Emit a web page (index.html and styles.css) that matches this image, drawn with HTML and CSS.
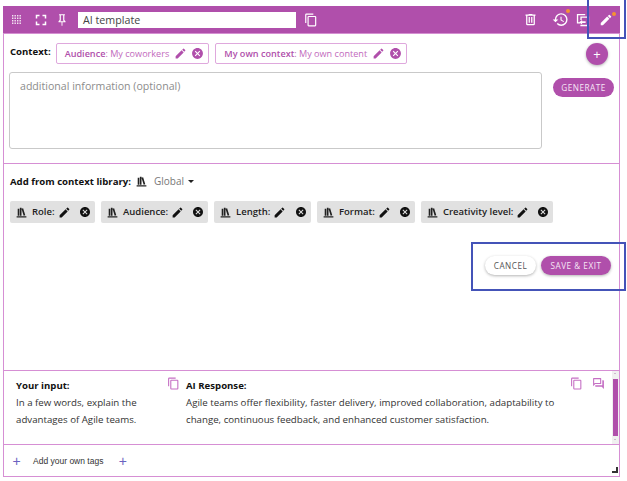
FILE: index.html
```html
<!DOCTYPE html>
<html lang="en">
<head>
<meta charset="utf-8">
<title>AI template</title>
<link rel="stylesheet" href="styles.css">
</head>
<body>
<svg class="defs" width="0" height="0" aria-hidden="true">
  <symbol id="pencil" viewBox="0 0 24 24"><path d="M3 17.25V21h3.75L17.81 9.94l-3.75-3.75L3 17.25zM20.71 7.04a1 1 0 0 0 0-1.41l-2.34-2.34a1 1 0 0 0-1.41 0l-1.83 1.83 3.75 3.75 1.83-1.83z"/></symbol>
  <symbol id="cancel" viewBox="0 0 24 24"><path d="M12 2C6.47 2 2 6.47 2 12s4.47 10 10 10 10-4.47 10-10S17.53 2 12 2zm5 13.59L15.59 17 12 13.41 8.41 17 7 15.59 10.59 12 7 8.41 8.41 7 12 10.59 15.59 7 17 8.41 13.41 12 17 15.59z"/></symbol>
  <symbol id="shelf" viewBox="0 0 24 24"><path d="M9 3V18H12V3H9M12 5L16 18L19 17L15 4L12 5M5 5V18H8V5H5M3 19V21H21V19H3Z"/></symbol>
  <symbol id="copy" viewBox="0 0 24 24"><path d="M19 21H8V7H19M19 5H8A2 2 0 0 0 6 7V21A2 2 0 0 0 8 23H19A2 2 0 0 0 21 21V7A2 2 0 0 0 19 5M16 1H4A2 2 0 0 0 2 3V17H4V3H16V1Z"/></symbol>
</svg>

<div class="window">
  <header class="toolbar">
    <svg class="ti ti-grid" viewBox="0 0 9 9"><path d="M0 0h1.400v1.400H0zM2.500 0h1.400v1.400H2.500zM5 0h1.400v1.400H5zM7.500 0h1.400v1.400H7.500zM0 2.500h1.400v1.400H0zM2.500 2.500h1.400v1.400H2.500zM5 2.500h1.400v1.400H5zM7.500 2.500h1.400v1.400H7.500zM0 5h1.400v1.400H0zM2.500 5h1.400v1.400H2.500zM5 5h1.400v1.400H5zM7.500 5h1.400v1.400H7.500zM0 7.500h1.400v1.400H0zM2.500 7.500h1.400v1.400H2.500zM5 7.500h1.400v1.400H5zM7.500 7.500h1.400v1.400H7.500z"/></svg>
    <svg class="ti ti-full" viewBox="0 0 24 24"><path d="M7 14H5v5h5v-2H7v-3zm-2-4h2V7h3V5H5v5zm12 7h-3v2h5v-5h-2v3zM14 5v2h3v3h2V5h-5z"/></svg>
    <svg class="ti ti-pin" viewBox="0 0 24 24"><path d="M16 12V4H17V2H7V4H8V12L6 14V16H11.2V22H12.8V16H18V14L16 12M8.8 14L10 12.8V4H14V12.8L15.2 14H8.8Z"/></svg>
    <div class="title-input">AI template</div>
    <svg class="ti ti-copy"><use href="#copy"/></svg>
    <span class="spacer"></span>
    <svg class="ti ti-trash" viewBox="0 0 24 24"><path d="M9 3V4H4V6H5V19A2 2 0 0 0 7 21H17A2 2 0 0 0 19 19V6H20V4H15V3H9M7 6H17V19H7V6M9 8V17H11V8H9M13 8V17H15V8H13Z"/></svg>
    <span class="dotted ti-history">
      <svg class="ti-fill" viewBox="0 0 24 24"><path d="M13 3a9 9 0 0 0-9 9H1l3.89 3.89.07.14L9 12H6c0-3.87 3.13-7 7-7s7 3.13 7 7-3.13 7-7 7c-1.93 0-3.68-.79-4.94-2.06l-1.42 1.42A8.954 8.954 0 0 0 13 21a9 9 0 0 0 0-18zm-1 5v5l4.28 2.54.72-1.21-3.5-2.08V8H12z"/></svg>
      <i class="dot"></i>
    </span>
    <svg class="ti ti-compare" viewBox="0 0 16 16"><path d="M1 1h9.500v1.500H2.500v8H5V12H1zM5 4h10v11H5v-1.500h8.500v-8h-7V8H5z"/><path d="M3.500 10.500 7 8v1.500h4v1.800H7V13z"/></svg>
    <span class="dotted ti-edit">
      <svg class="ti-fill"><use href="#pencil"/></svg>
      <i class="dot"></i>
    </span>
  </header>

  <section class="context">
    <div class="context-row">
      <strong class="label">Context:</strong>
      <span class="ctx-chip"><b>Audience</b>: My coworkers<svg class="ci ci-pen"><use href="#pencil"/></svg><svg class="ci ci-x"><use href="#cancel"/></svg></span>
      <span class="ctx-chip"><b>My own context</b>: My own content<svg class="ci ci-pen"><use href="#pencil"/></svg><svg class="ci ci-x"><use href="#cancel"/></svg></span>
      <span class="spacer"></span>
      <button class="fab">+</button>
    </div>
    <div class="prompt-row">
      <div class="prompt">additional information (optional)</div>
      <button class="pill generate">GENERATE</button>
    </div>
  </section>

  <section class="library">
    <div class="library-head">
      <strong class="label">Add from context library:</strong>
      <svg class="shelf-head"><use href="#shelf"/></svg>
      <span class="scope">Global</span>
      <i class="caret"></i>
    </div>
    <div class="tag-row">
      <span class="tag tag-role"><svg class="gi"><use href="#shelf"/></svg><b>Role:</b><svg class="gi gi-pen"><use href="#pencil"/></svg><svg class="gi gi-x"><use href="#cancel"/></svg></span>
      <span class="tag tag-aud"><svg class="gi"><use href="#shelf"/></svg><b>Audience:</b><svg class="gi gi-pen"><use href="#pencil"/></svg><svg class="gi gi-x"><use href="#cancel"/></svg></span>
      <span class="tag tag-len"><svg class="gi"><use href="#shelf"/></svg><b>Length:</b><svg class="gi gi-pen"><use href="#pencil"/></svg><svg class="gi gi-x"><use href="#cancel"/></svg></span>
      <span class="tag tag-fmt"><svg class="gi"><use href="#shelf"/></svg><b>Format:</b><svg class="gi gi-pen"><use href="#pencil"/></svg><svg class="gi gi-x"><use href="#cancel"/></svg></span>
      <span class="tag tag-cre"><svg class="gi"><use href="#shelf"/></svg><b>Creativity level:</b><svg class="gi gi-pen"><use href="#pencil"/></svg><svg class="gi gi-x"><use href="#cancel"/></svg></span>
    </div>
    <div class="actions">
      <button class="pill cancel">CANCEL</button>
      <button class="pill save">SAVE &amp; EXIT</button>
    </div>
  </section>

  <section class="history">
    <div class="col-input">
      <strong class="label">Your input:</strong>
      <p>In a few words, explain the<br>advantages of Agile teams.</p>
    </div>
    <svg class="hi hi-copy1"><use href="#copy"/></svg>
    <div class="col-response">
      <strong class="label">AI Response:</strong>
      <p>Agile teams offer flexibility, faster delivery, improved collaboration, adaptability to<br>change, continuous feedback, and enhanced customer satisfaction.</p>
    </div>
    <div class="response-icons">
      <svg class="hi"><use href="#copy"/></svg>
      <svg class="hi" viewBox="0 0 24 24"><path d="M15,4V11H5.170L4,12.170V4H15M16,2H3A1,1 0 0,0 2,3V17L6,13H16A1,1 0 0,0 17,12V3A1,1 0 0,0 16,2M21,6H19V15H6V17A1,1 0 0,0 7,18H18L22,22V7A1,1 0 0,0 21,6Z"/></svg>
    </div>
    <div class="scrollbar"><i class="up"></i><i class="thumb"></i><i class="down"></i></div>
  </section>

  <footer class="tags-foot">
    <span class="plus">+</span>
    <span class="foot-text">Add your own tags</span>
    <span class="plus">+</span>
    <i class="grip"></i>
  </footer>
</div>

<div class="callout callout-top"></div>
<div class="callout callout-actions"></div>
</body>
</html>
```

FILE: styles.css
```css
* { box-sizing: border-box; }

html, body {
  margin: 0;
  height: 100%;
  background: #fff;
  overflow: hidden;
}

body {
  position: relative;
  font-family: "Open Sans", "Noto Sans", sans-serif;
  color: #333;
}

.defs { position: absolute; }

.window {
  width: 617px;
  height: 471px;
  margin: 6px 0 0 3px;
  border: 1px solid #d68fd4;
  border-top: 0;
  display: flex;
  flex-direction: column;
}

.spacer { flex: 1; }

/* toolbar */
.toolbar {
  height: 28px;
  margin: 0 -1px;
  background: #b04fab;
  border-bottom: 1px solid #d58fd2;
  display: flex;
  align-items: center;
  flex: none;
}

.ti { fill: #fff; flex: none; display: block; }
.ti-fill { fill: #fff; width: 100%; height: 100%; display: block; }

.ti-grid { width: 9px; height: 9px; margin-left: 9px; opacity: .85; }
.ti-full { width: 18px; height: 18px; margin-left: 11px; }
.ti-pin { width: 14px; height: 14px; margin-left: 5px; }

.title-input {
  width: 218px;
  height: 16px;
  margin-left: 9px;
  padding-left: 5px;
  background: #fff;
  font-size: 10.7px;
  line-height: 16px;
  color: #444;
}

.ti-copy { width: 14px; height: 14px; margin-left: 8px; }
.ti-trash { width: 15px; height: 15px; }
.dotted { position: relative; display: block; flex: none; }
.ti-history { width: 17px; height: 17px; margin-left: 14px; }
.ti-compare { width: 14px; height: 14px; margin-left: 7px; }
.ti-edit { width: 14px; height: 14px; margin: 0 7px 0 9px; }

.dot {
  position: absolute;
  top: -1px;
  right: -3px;
  width: 4px;
  height: 4px;
  border-radius: 50%;
  background: #f59331;
}

.ti-history .dot { top: -2px; right: -1px; }
.ti-edit .dot { right: -3px; }

.label {
  font-size: 9.6px;
  font-weight: 700;
  color: #111;
}

/* context */
.context {
  height: 130px;
  flex: none;
  padding: 9px 5px 0 5px;
  border-bottom: 1px solid #d68fd4;
}

.context-row {
  display: flex;
  align-items: flex-start;
  height: 22px;
}

.context-row .label { line-height: 18px; margin: 0 5px 0 1px; }

.ctx-chip {
  height: 21px;
  margin-right: 6px;
  padding-left: 8px;
  border: 1px solid #dfa8dd;
  border-radius: 2px;
  font-size: 9.1px;
  line-height: 19px;
  color: #c26abd;
  display: flex;
  align-items: center;
  white-space: pre;
}

.ctx-chip b { color: #b04fab; font-weight: 600; }

.ci { fill: #b04fab; flex: none; }
.ci-pen { width: 13px; height: 13px; margin-left: 5px; }
.ci-x { width: 13px; height: 13px; margin: 0 4px 0 4px; }

.fab {
  width: 22px;
  height: 22px;
  margin: 0 6px 0 0;
  border: 0;
  padding: 0;
  border-radius: 50%;
  background: #b04fab;
  color: #fff;
  font: 400 13px/22px "Open Sans", sans-serif;
  box-shadow: 0 1px 3px rgba(0,0,0,.3);
}

.prompt-row {
  display: flex;
  align-items: flex-start;
  margin-top: 7px;
}

.prompt {
  width: 534px;
  height: 77px;
  border: 1px solid #c9c9c9;
  border-radius: 3px;
  padding: 6px 10px;
  font-size: 10.6px;
  line-height: 15px;
  color: #8c8c8c;
}

.pill {
  border: 0;
  border-radius: 10px;
  padding: 0;
  font-family: "Open Sans", sans-serif;
  letter-spacing: .5px;
  white-space: nowrap;
}

.generate {
  width: 61px;
  height: 19px;
  margin: 6px 0 0 11px;
  background: #b04fab;
  color: #f6e6f5;
  font-size: 8.2px;
}

/* library */
.library {
  flex: none;
  height: 207px;
  padding: 9px 6px 0 6px;
  border-bottom: 1px solid #d68fd4;
}

.library-head {
  display: flex;
  align-items: center;
  height: 16px;
}

.shelf-head { width: 13px; height: 13px; margin-left: 4px; fill: #222; flex: none; }
.scope { margin-left: 6px; font-size: 10px; color: #777; }

.caret {
  margin-left: 4px;
  border: 3px solid transparent;
  border-top: 3px solid #222;
  border-bottom: 0;
}

.tag-row {
  display: flex;
  gap: 6px;
  margin-top: 12px;
}

.tag {
  height: 22px;
  padding-left: 5px;
  background: #e1e1e1;
  border-radius: 2px;
  display: flex;
  align-items: center;
  font-size: 9.5px;
  color: #222;
}

.tag b { font-weight: 600; white-space: nowrap; margin: 0 0 1px 4px; }
.tag-role { width: 85px; }
.tag-aud { width: 107px; }
.tag-len { width: 97px; }
.tag-fmt { width: 98px; }
.tag-cre { width: 132px; }

.gi { width: 13px; height: 13px; fill: #222; flex: none; }
.gi-pen { width: 13px; height: 13px; margin-left: 3px; fill: #111; }
.gi-x { width: 12px; height: 12px; margin-left: auto; margin-right: 4px; fill: #111; }

.actions {
  display: flex;
  justify-content: flex-end;
  gap: 5px;
  margin-top: 33px;
  padding-right: 2px;
}

.cancel, .save {
  height: 19px;
  font-size: 8.2px;
  box-shadow: 0 1px 3px rgba(0,0,0,.3);
}

.cancel { width: 51px; background: #fff; color: #555; }
.save { width: 70px; background: #b04fab; color: #f6e6f5; }

/* history */
.history {
  flex: none;
  height: 74px;
  position: relative;
  display: flex;
  padding: 7px 0 0 12px;
  border-bottom: 1px solid #d68fd4;
  font-size: 9.7px;
}

.history p {
  margin: 0;
  line-height: 17px;
  color: #333;
}

.history .label { display: block; line-height: 16px; }
.col-input { width: 151px; flex: none; }
.col-response { margin-left: 6px; white-space: nowrap; }

.hi { width: 13px; height: 13px; fill: #c56fc4; flex: none; display: block; }
.hi-copy1 { margin-top: -1px; }

.response-icons {
  position: absolute;
  top: 6px;
  right: 14px;
  display: flex;
  gap: 9px;
}

.scrollbar {
  position: absolute;
  top: 0;
  right: 0;
  bottom: 0;
  width: 7px;
  background: #f0f0f0;
  display: flex;
  flex-direction: column;
  align-items: stretch;
}

.thumb { flex: 1; margin: 1px 1px; background: #b04fab; }
.up, .down { height: 7px; flex: none; position: relative; }
.up::after, .down::after {
  content: "";
  position: absolute;
  left: 2px;
  top: 2px;
  border: 1.5px solid transparent;
}
.up::after { border-bottom-color: #b07ab0; border-top: 0; }
.down::after { border-top-color: #b07ab0; border-bottom: 0; }

/* footer */
.tags-foot {
  flex: 1;
  position: relative;
  display: flex;
  align-items: center;
  padding-left: 8px;
  font-size: 8.5px;
  color: #333;
  font-family: "Liberation Sans", Arial, sans-serif;
}

.plus { color: #6a62c0; font-size: 14px; line-height: 14px; width: 9px; text-align: center; }
.foot-text { margin: 0 15px 0 12px; white-space: nowrap; }

.grip {
  position: absolute;
  right: 1px;
  bottom: 3px;
  width: 6px;
  height: 6px;
  border-right: 2px solid #333;
  border-bottom: 2px solid #333;
}

/* review callouts over the screenshot */
.callout {
  position: absolute;
  border: 2px solid #4453b8;
  pointer-events: none;
}

.callout-top { left: 587px; top: 0; width: 39px; height: 39px; border-top: 0; }
.callout-actions { left: 471px; top: 242px; width: 155px; height: 49px; }
```
